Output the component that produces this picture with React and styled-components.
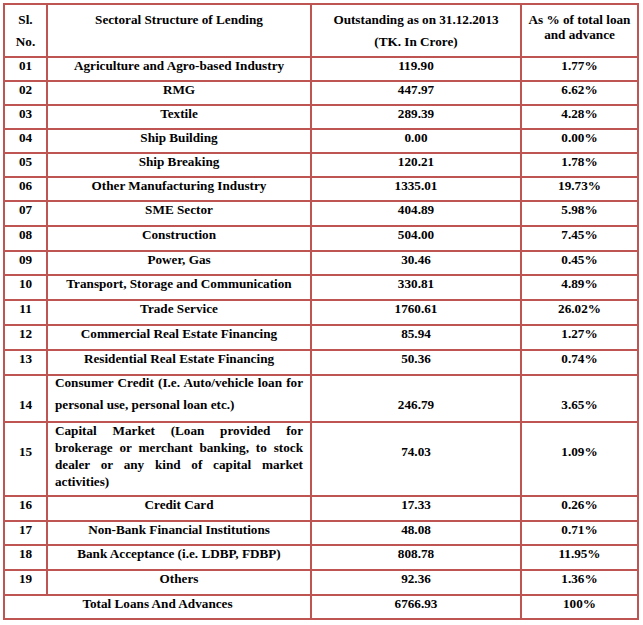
import React from 'react';
import styled, { createGlobalStyle } from 'styled-components';

const line = '#bf5552';

const GlobalStyle = createGlobalStyle`
  html, body { margin: 0; padding: 0; background: #fff; }
  body { font-family: "Liberation Serif", "Times New Roman", serif; }
`;

const Page = styled.div`
  padding: 3px;
`;

const Table = styled.table`
  border-collapse: separate;
  border-spacing: 0;
  table-layout: fixed;
  width: 636px;
  border-top: 2px solid ${line};
  border-left: 2px solid ${line};
  font-size: 13.2px;
  font-weight: bold;
  color: #000;
`;

const HeadCell = styled.th`
  box-sizing: border-box;
  width: ${p => p.$w}px;
  height: 53px;
  padding: ${p => p.$pad}px 2px 0;
  border-right: 2px solid ${line};
  border-bottom: 2px solid ${line};
  vertical-align: top;
  text-align: center;
  font-weight: bold;
  line-height: ${p => p.$lh}px;
`;

const Cell = styled.td`
  box-sizing: border-box;
  height: ${p => p.$h}px;
  padding: ${p => p.$pad || 0}px ${p => (p.$justify ? 7 : 2)}px 0;
  border-right: 2px solid ${line};
  border-bottom: 2px solid ${line};
  vertical-align: top;
  text-align: ${p => (p.$justify ? 'justify' : 'center')};
  line-height: 15px;
`;

const Desc = styled.div`
  line-height: ${p => p.$lh}px;
  margin-top: ${p => p.$shift}px;
`;

const rows = [
  ['01', 'Agriculture and Agro-based Industry', '119.90', '1.77%', 24],
  ['02', 'RMG', '447.97', '6.62%', 24],
  ['03', 'Textile', '289.39', '4.28%', 24],
  ['04', 'Ship Building', '0.00', '0.00%', 24],
  ['05', 'Ship Breaking', '120.21', '1.78%', 24],
  ['06', 'Other Manufacturing Industry', '1335.01', '19.73%', 24],
  ['07', 'SME Sector', '404.89', '5.98%', 25],
  ['08', 'Construction', '504.00', '7.45%', 25],
  ['09', 'Power, Gas', '30.46', '0.45%', 24],
  ['10', 'Transport, Storage and Communication', '330.81', '4.89%', 25],
  ['11', 'Trade Service', '1760.61', '26.02%', 25],
  ['12', 'Commercial Real Estate Financing', '85.94', '1.27%', 25],
  ['13', 'Residential Real Estate Financing', '50.36', '0.74%', 25],
  ['14', 'Consumer Credit (I.e. Auto/vehicle loan for personal use, personal loan etc.)', '246.79', '3.65%', 47, { lh: 22, shift: -4, pad: 21 }],
  ['15', 'Capital Market (Loan provided for brokerage or merchant banking, to stock dealer or any kind of capital market activities)', '74.03', '1.09%', 74, { lh: 17, shift: -1, pad: 21 }],
  ['16', 'Credit Card', '17.33', '0.26%', 25],
  ['17', 'Non-Bank Financial Institutions', '48.08', '0.71%', 24],
  ['18', 'Bank Acceptance (i.e. LDBP, FDBP)', '808.78', '11.95%', 25],
  ['19', 'Others', '92.36', '1.36%', 25],
];

export default function App() {
  return (
    <Page>
      <GlobalStyle />
      <Table>
        <thead>
          <tr>
            <HeadCell $w={43} $lh={22} $pad={4}>Sl.<br />No.</HeadCell>
            <HeadCell $w={264} $lh={22} $pad={4}>Sectoral Structure of Lending</HeadCell>
            <HeadCell $w={210} $lh={22} $pad={4}>Outstanding as on 31.12.2013<br />(TK. In Crore)</HeadCell>
            <HeadCell $w={117} $lh={15} $pad={7}>As % of total loan<br />and advance</HeadCell>
          </tr>
        </thead>
        <tbody>
          {rows.map(([no, label, amount, pct, h, wrap]) => (
            <tr key={no}>
              <Cell $h={h} $pad={wrap && wrap.pad}>{no}</Cell>
              {wrap ? (
                <Cell $h={h} $justify>
                  <Desc $lh={wrap.lh} $shift={wrap.shift}>{label}</Desc>
                </Cell>
              ) : (
                <Cell $h={h}>{label}</Cell>
              )}
              <Cell $h={h} $pad={wrap && wrap.pad}>{amount}</Cell>
              <Cell $h={h} $pad={wrap && wrap.pad}>{pct}</Cell>
            </tr>
          ))}
          <tr>
            <Cell $h={24} colSpan={2}>Total Loans And Advances</Cell>
            <Cell $h={24}>6766.93</Cell>
            <Cell $h={24}>100%</Cell>
          </tr>
        </tbody>
      </Table>
    </Page>
  );
}
